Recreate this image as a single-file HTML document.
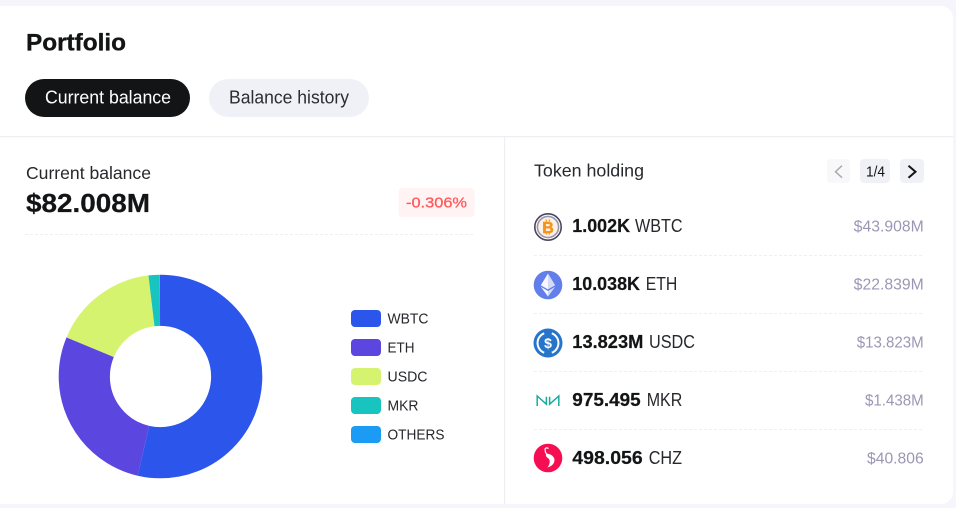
<!DOCTYPE html>
<html><head><meta charset="utf-8"><title>Portfolio</title>
<style>
html,body{margin:0;padding:0;background:#f5f5fb;width:956px;height:508px;overflow:hidden}
svg{display:block;font-family:"Liberation Sans",sans-serif}
.b{font-weight:700}
.v{fill:#9a97b4;font-size:15.5px}
.n{fill:#26282c;font-size:18px}
.q{fill:#131415;font-size:18px;font-weight:700;stroke:#131415;stroke-width:.2px}
.l{fill:#26282c;font-size:15px}
</style></head><body>
<svg width="956" height="508" viewBox="0 0 956 508" xmlns="http://www.w3.org/2000/svg">
<path d="M0 6H941a12 12 0 0 1 12 12V492a12 12 0 0 1-12 12H0Z" fill="#fff"/>
<rect x="0" y="136" width="953" height="1.3" fill="#eeeef3"/>
<rect x="504" y="137" width="1.2" height="367" fill="#eeeef3"/>

<text x="26" y="50.7" class="b" font-size="24" fill="#131415" stroke="#131415" stroke-width=".35" textLength="100" lengthAdjust="spacingAndGlyphs">Portfolio</text>
<rect x="25" y="79" width="165" height="38" rx="19" fill="#131415"/>
<text x="45" y="103.5" font-size="18" fill="#fff" textLength="126" lengthAdjust="spacingAndGlyphs">Current balance</text>
<rect x="209" y="79" width="160" height="38" rx="19" fill="#f0f1f7"/>
<text x="229" y="103.5" font-size="18" fill="#2b2d33" textLength="120" lengthAdjust="spacingAndGlyphs">Balance history</text>

<text x="26" y="179" font-size="17.5" fill="#26282c" textLength="125" lengthAdjust="spacingAndGlyphs">Current balance</text>
<text x="26" y="212" class="b" font-size="26" fill="#131415" stroke="#131415" stroke-width=".25" textLength="124" lengthAdjust="spacingAndGlyphs">$82.008M</text>
<rect x="398.5" y="188" width="76" height="29" rx="4" fill="#fff3f3"/>
<text x="406" y="207.5" font-size="15" fill="#ff5757" stroke="#ff5757" stroke-width=".25" textLength="61" lengthAdjust="spacingAndGlyphs">-0.306%</text>
<line x1="25" y1="234.5" x2="475" y2="234.5" stroke="#efeff3" stroke-dasharray="3 2"/>

<g fill="none" stroke-width="51.2" transform="rotate(-90 160.5 376.5)">
<circle cx="160.5" cy="376.5" r="76.2" pathLength="360" stroke="#2c55ec" stroke-dasharray="193.2 166.8"/>
<circle cx="160.5" cy="376.5" r="76.2" pathLength="360" stroke="#5b46e0" stroke-dasharray="0 193.2 99.8 67"/>
<circle cx="160.5" cy="376.5" r="76.2" pathLength="360" stroke="#d6f36f" stroke-dasharray="0 293 60.6 6.4"/>
<circle cx="160.5" cy="376.5" r="76.2" pathLength="360" stroke="#17c4c0" stroke-dasharray="0 353.6 6.4 0"/>
</g>

<rect x="351" y="310" width="30" height="17" rx="4" fill="#2c55ec"/>
<rect x="351" y="339" width="30" height="17" rx="4" fill="#5b46e0"/>
<rect x="351" y="368" width="30" height="17" rx="4" fill="#d6f36f"/>
<rect x="351" y="397" width="30" height="17" rx="4" fill="#17c4c0"/>
<rect x="351" y="426" width="30" height="17" rx="4" fill="#1c9bf5"/>
<text x="387.5" y="323.5" class="l" textLength="41" lengthAdjust="spacingAndGlyphs">WBTC</text>
<text x="387.5" y="352.5" class="l" textLength="27" lengthAdjust="spacingAndGlyphs">ETH</text>
<text x="387.5" y="381.5" class="l" textLength="40" lengthAdjust="spacingAndGlyphs">USDC</text>
<text x="387.5" y="410.5" class="l" textLength="31" lengthAdjust="spacingAndGlyphs">MKR</text>
<text x="387.5" y="439.5" class="l" textLength="57" lengthAdjust="spacingAndGlyphs">OTHERS</text>

<text x="534" y="176.7" font-size="17.5" fill="#26282c" textLength="110" lengthAdjust="spacingAndGlyphs">Token holding</text>
<rect x="827" y="159" width="23" height="24" rx="4" fill="#f8f8fb"/>
<path d="M842 165.7L835.5 171.7L842 177.7" fill="none" stroke="#aaaab2" stroke-width="1.5"/>
<rect x="860" y="159" width="30" height="24" rx="4" fill="#f0f1f7"/>
<text x="866" y="176.7" font-size="15" fill="#131415" textLength="19" lengthAdjust="spacingAndGlyphs">1/4</text>
<rect x="900" y="159" width="24" height="24" rx="4" fill="#f0f1f7"/>
<path d="M908.5 165.7L915.5 171.7L908.5 177.7" fill="none" stroke="#131415" stroke-width="2"/>

<g stroke="#efeff3" stroke-dasharray="3 2">
<line x1="534" y1="255.5" x2="924" y2="255.5"/>
<line x1="534" y1="313.5" x2="924" y2="313.5"/>
<line x1="534" y1="371.5" x2="924" y2="371.5"/>
<line x1="534" y1="429.5" x2="924" y2="429.5"/>
</g>

<!-- WBTC -->
<circle cx="548" cy="227" r="13.2" fill="#fff" stroke="#4a4660" stroke-width="1.6"/>
<circle cx="548" cy="227" r="10.6" fill="#fbf1e6" stroke="#9a96ab" stroke-width="1.6"/>
<text x="548" y="232.8" text-anchor="middle" class="b" font-size="16" fill="#f7931a" stroke="#f7931a" stroke-width=".5">B</text>
<path d="M546.3 219.5v2M549.3 219.5v2M546.3 232.5v2M549.3 232.5v2" stroke="#f7931a" stroke-width="1.2"/>

<!-- ETH -->
<circle cx="548" cy="285" r="14.3" fill="#627eea"/>
<path d="M548 273.5L540.8 285.3L548 289.4Z" fill="#f6f8fe"/>
<path d="M548 273.5L555.2 285.3L548 289.4Z" fill="#d3dbf9"/>
<path d="M540.8 286.8L548 291V296.5Z" fill="#f6f8fe"/>
<path d="M555.2 286.8L548 291V296.5Z" fill="#d3dbf9"/>

<!-- USDC -->
<circle cx="548" cy="343" r="14.5" fill="#2775ca"/>
<path d="M544.2 333.3A10.4 10.4 0 0 0 544.2 352.7M551.8 333.3A10.4 10.4 0 0 1 551.8 352.7" fill="none" stroke="#fff" stroke-width="2"/>
<text x="548" y="348" text-anchor="middle" class="b" font-size="14" fill="#fff">$</text>

<!-- MKR -->
<path d="M537.2 406V396L546.4 404.2V396.8M558.8 406V396L549.6 404.2V396.8" fill="none" stroke="#1aab9b" stroke-width="1.5"/>

<!-- CHZ -->
<circle cx="548" cy="458" r="14.3" fill="#f50f52"/>
<path d="M546 454C549 453 554.5 456 554.5 460C554.5 464 551 466.5 547.5 467.5C550 464 550.5 460.5 548.5 458.5C546.5 457 545.5 456 546 454Z" fill="#fff"/>
<path d="M547 454C544.5 452.5 545.5 450.5 545 449C545.3 447.8 547 447.5 548.5 448.5" fill="none" stroke="#fff" stroke-width="1.2"/>

<text x="572.3" y="232" class="q" textLength="57.7" lengthAdjust="spacingAndGlyphs">1.002K</text>
<text x="635" y="232" class="n" textLength="47.5" lengthAdjust="spacingAndGlyphs">WBTC</text>
<text x="572.3" y="290" class="q" textLength="67.7" lengthAdjust="spacingAndGlyphs">10.038K</text>
<text x="645.7" y="290" class="n" textLength="31.6" lengthAdjust="spacingAndGlyphs">ETH</text>
<text x="572.3" y="348" class="q" textLength="71" lengthAdjust="spacingAndGlyphs">13.823M</text>
<text x="649" y="348" class="n" textLength="46" lengthAdjust="spacingAndGlyphs">USDC</text>
<text x="572.3" y="406" class="q" textLength="68.4" lengthAdjust="spacingAndGlyphs">975.495</text>
<text x="646.7" y="406" class="n" textLength="35.6" lengthAdjust="spacingAndGlyphs">MKR</text>
<text x="572.3" y="464" class="q" textLength="70.4" lengthAdjust="spacingAndGlyphs">498.056</text>
<text x="648.7" y="464" class="n" textLength="33.3" lengthAdjust="spacingAndGlyphs">CHZ</text>

<text x="853.7" y="231.5" class="v" textLength="70" lengthAdjust="spacingAndGlyphs">$43.908M</text>
<text x="853.7" y="289.5" class="v" textLength="70" lengthAdjust="spacingAndGlyphs">$22.839M</text>
<text x="856.7" y="347.5" class="v" textLength="67" lengthAdjust="spacingAndGlyphs">$13.823M</text>
<text x="865" y="405.5" class="v" textLength="58.7" lengthAdjust="spacingAndGlyphs">$1.438M</text>
<text x="867" y="463.5" class="v" textLength="56.7" lengthAdjust="spacingAndGlyphs">$40.806</text>
</svg>
</body></html>
